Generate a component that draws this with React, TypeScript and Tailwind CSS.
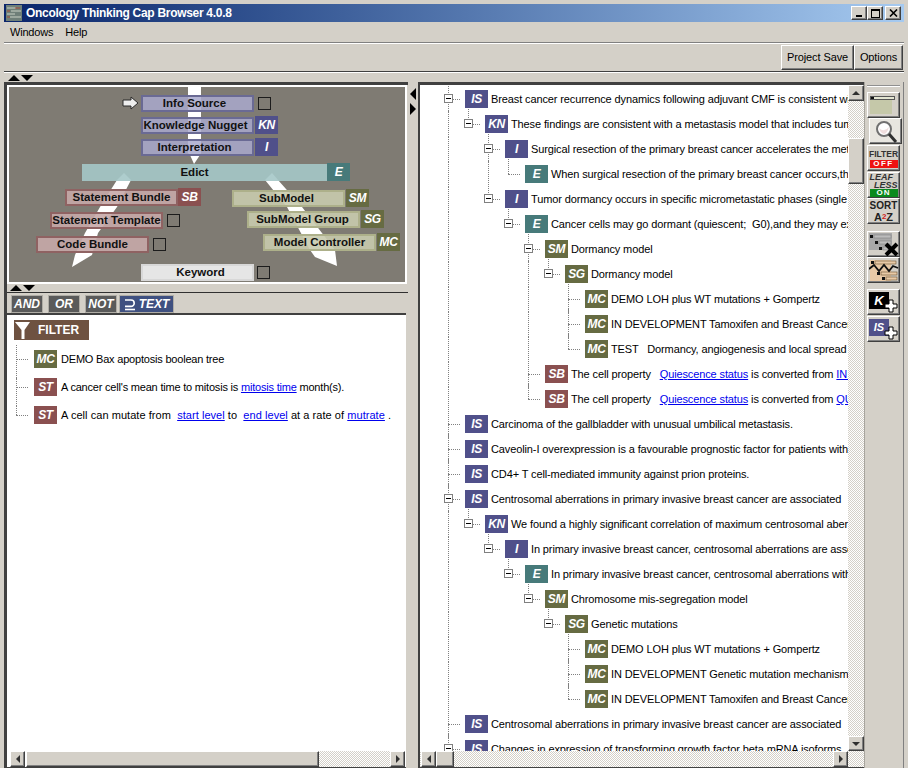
import React from "react";

const tagColors: Record<string, string> = {
  IS: "bg-[#50508a]", KN: "bg-[#50508a]", I: "bg-[#50508a]", E: "bg-[#477a7a]",
  SM: "bg-[#666b42]", SG: "bg-[#666b42]", MC: "bg-[#666b42]", SB: "bg-[#8a5050]", ST: "bg-[#8a5050]",
};

function Tag({ t }: { t: string }) {
  return (
    <span className={`${tagColors[t]} shrink-0 w-[23px] h-[18px] flex items-center justify-center text-white italic font-bold text-[12px] leading-none tracking-[-0.3px] font-['Liberation_Sans',sans-serif]`}>
      {t}
    </span>
  );
}

const raised = "bg-[#d4d0c8] border border-t-white border-l-white border-r-[#404040] border-b-[#404040] shadow-[inset_-1px_-1px_0_#808080]";
const checker = "bg-[repeating-conic-gradient(#d4d0c8_0_25%,#ffffff_0_50%)] bg-[length:2px_2px]";

function Tri({ dir, size = 4, color = "#000" }: { dir: "u" | "d" | "l" | "r"; size?: number; color?: string }) {
  const pts = { u: "0,6 12,6 6,0", d: "0,0 12,0 6,6", l: "6,0 6,12 0,6", r: "0,0 0,12 6,6" }[dir];
  const vertical = dir === "u" || dir === "d";
  return (
    <svg width={vertical ? size * 2 : size} height={vertical ? size : size * 2} viewBox={vertical ? "0 0 12 6" : "0 0 6 12"} className="block">
      <polygon points={pts} fill={color} />
    </svg>
  );
}

function ScrollBtn({ dir, className = "" }: { dir: "u" | "d" | "l" | "r"; className?: string }) {
  return (
    <div className={`${raised} shrink-0 flex items-center justify-center ${className}`}>
      <Tri dir={dir} color="#303030" />
    </div>
  );
}

type Seg = string | { link: string };
type Row = { level: number; tag: string; text: Seg[]; exp?: boolean };

const r = (level: number, tag: string, exp: boolean, ...text: Seg[]): Row => ({ level, tag, text, exp });

const rows: Row[] = [
  r(0, "IS", true, "Breast cancer recurrence dynamics following adjuvant CMF is consistent with tumor"),
  r(1, "KN", true, "These findings are consistent with a metastasis model that includes tumor dormancy"),
  r(2, "I", true, "Surgical resection of the primary breast cancer accelerates the metastatic process"),
  r(3, "E", false, "When surgical resection of the primary breast cancer occurs,the metastatic"),
  r(2, "I", true, "Tumor dormancy occurs in specific micrometastatic phases (single"),
  r(3, "E", true, "Cancer cells may go dormant (quiescent;  G0),and they may exit dormancy"),
  r(4, "SM", true, "Dormancy model"),
  r(5, "SG", true, "Dormancy model"),
  r(6, "MC", false, "DEMO LOH plus WT mutations + Gompertz"),
  r(6, "MC", false, "IN DEVELOPMENT Tamoxifen and Breast Cancer Recurrence"),
  r(6, "MC", false, "TEST   Dormancy, angiogenesis and local spread"),
  r(4, "SB", false, "The cell property   ", { link: "Quiescence status" }, " is converted from ", { link: "IN DORMANCY" }),
  r(4, "SB", false, "The cell property   ", { link: "Quiescence status" }, " is converted from ", { link: "QUIESCENT" }),
  r(0, "IS", false, "Carcinoma of the gallbladder with unusual umbilical metastasis."),
  r(0, "IS", false, "Caveolin-I overexpression is a favourable prognostic factor for patients with breast"),
  r(0, "IS", false, "CD4+ T cell-mediated immunity against prion proteins."),
  r(0, "IS", true, "Centrosomal aberrations in primary invasive breast cancer are associated"),
  r(1, "KN", true, "We found a highly significant correlation of maximum centrosomal aberrations with"),
  r(2, "I", true, "In primary invasive breast cancer, centrosomal aberrations are associated with"),
  r(3, "E", true, "In primary invasive breast cancer, centrosomal aberrations with genetic"),
  r(4, "SM", true, "Chromosome mis-segregation model"),
  r(5, "SG", true, "Genetic mutations"),
  r(6, "MC", false, "DEMO LOH plus WT mutations + Gompertz"),
  r(6, "MC", false, "IN DEVELOPMENT Genetic mutation mechanisms"),
  r(6, "MC", false, "IN DEVELOPMENT Tamoxifen and Breast Cancer Recurrence"),
  r(0, "IS", false, "Centrosomal aberrations in primary invasive breast cancer are associated"),
  r(0, "IS", true, "Changes in expression of transforming growth factor beta mRNA isoforms"),
];

function hasNextSibling(i: number, level: number) {
  for (let j = i + 1; j < rows.length; j++) {
    if (rows[j].level < level) return false;
    if (rows[j].level === level) return true;
  }
  return level === 0;
}

function ancestorContinues(i: number, level: number) {
  for (let j = i; j >= 0; j--) {
    if (rows[j].level === level) return hasNextSibling(j, level);
    if (rows[j].level < level) return false;
  }
  return false;
}

function Segs({ segs }: { segs: Seg[] }) {
  return (
    <>
      {segs.map((s, i) =>
        typeof s === "string" ? <span key={i}>{s}</span> : <span key={i} className="text-[#0000ee] underline">{s.link}</span>
      )}
    </>
  );
}

function TreeRow({ row, i }: { row: Row; i: number }) {
  const x = 28 + 20 * row.level;
  const guides: number[] = [];
  for (let l = 0; l < row.level; l++) if (ancestorContinues(i, l)) guides.push(l);
  return (
    <div className="relative h-[25px] flex items-start" style={{ paddingLeft: 45 + 20 * row.level }}>
      {guides.map((l) => (
        <div key={l} className="absolute -top-[1px] h-[26px] border-l border-dotted border-[#808080]" style={{ left: 28 + 20 * l }} />
      ))}
      <div className="absolute -top-[3px] h-[15px] border-l border-dotted border-[#808080]" style={{ left: x }} />
      {hasNextSibling(i, row.level) && (
        <div className="absolute top-[12px] h-[14px] border-l border-dotted border-[#808080]" style={{ left: x }} />
      )}
      <div className="absolute top-[12px] w-[12px] border-t border-dotted border-[#808080]" style={{ left: x }} />
      {row.exp && (
        <div className="absolute top-[7px] w-[9px] h-[9px] border border-[#808080] bg-white flex items-center justify-center" style={{ left: x - 4 }}>
          <div className="w-[5px] h-[1px] bg-black" />
        </div>
      )}
      <div className="mt-[3px] mr-[3px]"><Tag t={row.tag} /></div>
      <div className="mt-[3px] leading-[18px] text-[11px] tracking-[-0.12px] whitespace-pre text-black"><Segs segs={row.text} /></div>
    </div>
  );
}

type NodeDef = { x: number; y: number; w: number; label: string; cls: string; tag?: string; tagX?: number; check?: number; dx?: number };

const purple = "bg-[#a9a9cc]/85 border-2 border-[#6a6a94]";
const pink = "bg-[#c6a9a9]/90 border-2 border-[#8f6262]";
const olive = "bg-[#c9cbae]/90 border-2 border-[#adb08a]";

const nodes: NodeDef[] = [
  { x: 141, y: 95, w: 113, label: "Info Source", cls: purple, check: 258, dx: -3 },
  { x: 141, y: 117, w: 113, label: "Knowledge Nugget", cls: purple, tag: "KN", tagX: 255, dx: -2 },
  { x: 141, y: 139, w: 113, label: "Interpretation", cls: purple, tag: "I", tagX: 255, dx: -3 },
  { x: 82, y: 164, w: 245, label: "Edict", cls: "bg-[#a5c8c8]/90", tag: "E", tagX: 327, dx: -10 },
  { x: 65, y: 189, w: 113, label: "Statement Bundle", cls: pink, tag: "SB", tagX: 178 },
  { x: 50, y: 212, w: 113, label: "Statement Template", cls: pink, check: 167 },
  { x: 36, y: 236, w: 113, label: "Code Bundle", cls: pink, check: 153 },
  { x: 232, y: 190, w: 113, label: "SubModel", cls: olive, tag: "SM", tagX: 346, dx: -2 },
  { x: 247, y: 211, w: 113, label: "SubModel Group", cls: olive, tag: "SG", tagX: 361, dx: -1 },
  { x: 263, y: 234, w: 113, label: "Model Controller", cls: olive, tag: "MC", tagX: 377 },
  { x: 141, y: 264, w: 113, label: "Keyword", cls: "bg-[#e6e6e6] border-2 border-[#d8d8d8]", check: 257, dx: 3 },
];

const OX = 9;
const OY = 87;

function Diagram() {
  return (
    <div className="relative h-[199px] shrink-0 bg-[#7f7b73] border-2 border-white overflow-hidden font-['Liberation_Sans',sans-serif]">
      <svg className="absolute left-0 top-0" width="398" height="197" viewBox={`${OX} ${OY} 398 197`}>
        <polygon points="188,87 201,87 201,153 200,155 194,164 190,155 188,153" fill="#fff" />
        <polygon points="124,173 131,180 117,207 98,233 92,255 72,267 75,255 85,233 100,207 117,180" fill="#fff" />
        <polygon points="272,173 278,180 302,207 335,250 337,266 315,257 310,250 287,207 265,180" fill="#fff" />
      </svg>
      <svg className="absolute" style={{ left: 122 - OX, top: 96 - OY }} width="17" height="14" viewBox="0 0 17 14">
        <polygon points="1,4 9,4 9,1 16,7 9,13 9,10 1,10" fill="#eeeeee" stroke="#2a2a2a" strokeWidth="1" />
      </svg>
      {nodes.map((n) => (
        <React.Fragment key={n.label}>
          <div
            className={`absolute h-[17px] flex items-center justify-center text-[11.5px] font-bold text-[#111] whitespace-nowrap ${n.cls}`}
            style={{ left: n.x - OX, top: n.y - OY, width: n.w }}
          >
            <span style={{ marginLeft: (n.dx ?? 0) * 2 }}>{n.label}</span>
          </div>
          {n.tag && (
            <div className="absolute" style={{ left: (n.tagX as number) - OX, top: n.y - 1 - OY }}>
              <Tag t={n.tag} />
            </div>
          )}
          {n.check && (
            <div className="absolute w-[13px] h-[13px] bg-[#7f7b73] border border-[#1c1c1c]" style={{ left: n.check - OX, top: n.y + 2 - OY }} />
          )}
        </React.Fragment>
      ))}
    </div>
  );
}

function FilterBtn({ label, cls, icon }: { label: string; cls: string; icon?: boolean }) {
  return (
    <div className={`h-[16px] flex items-center justify-center gap-[3px] ${cls} text-white italic font-bold text-[12px] font-['Liberation_Sans',sans-serif] outline-1 outline-[#b0ada6]`}>
      {icon && (
        <svg width="12" height="13" viewBox="0 0 12 13" fill="none" stroke="#fff" strokeWidth="1.6">
          <path d="M1 2 H7 A3.2 3.2 0 0 1 7 8.4 H1" />
          <path d="M1 11.5 H11" />
        </svg>
      )}
      {label}
    </div>
  );
}

function ListRow({ tag, first, last, children }: { tag: string; first?: boolean; last?: boolean; children: React.ReactNode }) {
  return (
    <div className="relative h-[28px] flex items-start pl-[27px]">
      <div className={`absolute left-[9px] border-l border-dotted border-[#808080] ${first ? "-top-[5px] h-[33px]" : last ? "top-0 h-[9px]" : "top-0 h-[28px]"}`} />
      <div className="absolute left-[9px] top-[9px] w-[12px] border-t border-dotted border-[#808080]" />
      <Tag t={tag} />
      <div className={`ml-[4px] leading-[18px] text-[11px] whitespace-pre text-black ${last ? "tracking-[0.05px]" : "tracking-[-0.2px]"}`}>{children}</div>
    </div>
  );
}

const L = ({ c }: { c: string }) => <span className="text-[#0000ee] underline">{c}</span>;

function ToolBtn({ children, className = "" }: { children: React.ReactNode; className?: string }) {
  return <div className={`${raised} w-[33px] h-[26px] relative overflow-hidden flex flex-col items-center justify-center ${className}`}>{children}</div>;
}

function Plus() {
  return (
    <svg className="absolute right-[1px] bottom-[1px]" width="14" height="14" viewBox="0 0 14 14">
      <path d="M5 1 H9 V5 H13 V9 H9 V13 H5 V9 H1 V5 H5 Z" fill="#fff" stroke="#000" strokeWidth="1" />
    </svg>
  );
}

function SplitArrows() {
  return (
    <div className="flex items-center gap-[1px]">
      <Tri dir="u" size={6} />
      <Tri dir="d" size={6} />
    </div>
  );
}

export default function App() {
  return (
    <div className="w-[908px] h-[768px] overflow-hidden bg-[#d4d0c8] flex flex-col pt-[4px] px-[4px] font-['Liberation_Sans',sans-serif] text-black">
      {/* Title bar */}
      <div className="h-[18px] shrink-0 flex items-center bg-linear-to-r from-[#0a246a] to-[#a6caf0] pl-[2px] pr-[3px]">
        <svg width="16" height="16" viewBox="0 0 16 16" className="shrink-0">
          <rect width="16" height="16" fill="#6f7f78" />
          <path d="M1 3h9M5 6h10M1 9h8M4 12h11" stroke="#c9d2c4" strokeWidth="1.2" />
          <path d="M1 6h3M9 3h5M1 12h3" stroke="#a34f3d" strokeWidth="1.2" />
        </svg>
        <span className="ml-[4px] text-white font-bold text-[12px] tracking-[-0.3px] whitespace-nowrap">Oncology Thinking Cap Browser 4.0.8</span>
        <div className="ml-auto flex items-center">
          <div className={`${raised} w-[16px] h-[14px] flex items-end justify-center pb-[2px]`}><div className="w-[6px] h-[2px] bg-black" /></div>
          <div className={`${raised} w-[16px] h-[14px] flex items-center justify-center`}><div className="w-[9px] h-[9px] border border-black border-t-2" /></div>
          <div className={`${raised} ml-[2px] w-[16px] h-[14px] flex items-center justify-center`}>
            <svg width="9" height="8" viewBox="0 0 9 8"><path d="M1 0.5 L8 7.5 M8 0.5 L1 7.5" stroke="#000" strokeWidth="1.6" /></svg>
          </div>
        </div>
      </div>
      {/* Menu */}
      <div className="h-[21px] shrink-0 flex items-center gap-[12px] pl-[6px] text-[11px] tracking-[-0.2px] border-b border-[#808080]">
        <span>Windows</span>
        <span>Help</span>
      </div>
      {/* Toolbar */}
      <div className="h-[29px] shrink-0 flex items-center justify-end pr-[1px] border-t border-white border-b border-b-[#404040]">
        <div className="flex items-stretch h-[25px] text-[11px] tracking-[-0.1px]">
          <div className={`${raised} w-[73px] flex items-center justify-center`}>Project Save</div>
          <div className={`${raised} w-[49px] flex items-center justify-center`}>Options</div>
        </div>
      </div>
      {/* Split arrows */}
      <div className="h-[10px] shrink-0 flex items-center pl-[4px] border-t border-white">
        <SplitArrows />
      </div>
      {/* Main */}
      <div className="flex-1 min-h-0 flex">
        {/* Left pane */}
        <div className="w-[404px] shrink-0 flex flex-col border-l-[3px] border-t-[3px] border-[#404040] border-r-0">
          <div className="mr-[1px]"><Diagram /></div>
          <div className="h-[9px] shrink-0 flex items-center pl-[3px] border-b border-[#303030]"><SplitArrows /></div>
          <div className="h-[20px] shrink-0 flex items-center pl-[4px] pt-[2px]">
            <FilterBtn label="AND" cls="w-[30px] bg-[#5a5a5a] ml-[1px]" />
            <FilterBtn label="OR" cls="w-[30px] bg-[#5a5a5a] ml-[7px]" />
            <FilterBtn label="NOT" cls="w-[30px] bg-[#5a5a5a] ml-[7px]" />
            <FilterBtn label="TEXT" icon cls="w-[53px] bg-[#3f5080] ml-[4px]" />
          </div>
          <div className="flex-1 min-h-0 bg-white border-t-2 border-[#404040] mr-[2px] relative flex flex-col">
            <div className="mt-[5px] ml-[7px] w-[75px] h-[20px] bg-[#6e5241] flex items-center text-white font-bold text-[12px]">
              <svg width="18" height="19" viewBox="0 0 18 19" className="shrink-0">
                <path d="M1 1 H16 L10.5 9 V18 H7.5 V9 Z" fill="#fff" />
              </svg>
              <span className="ml-[6px]">FILTER</span>
            </div>
            <div className="mt-[10px] flex flex-col">
              <ListRow tag="MC" first>DEMO Bax apoptosis boolean tree</ListRow>
              <ListRow tag="ST">A cancer cell's mean time to mitosis is <L c="mitosis time" /> month(s).</ListRow>
              <ListRow tag="ST" last>A cell can mutate from  <L c="start level" /> to  <L c="end level" /> at a rate of <L c="mutrate" /> .</ListRow>
            </div>
            <div className="mt-auto h-[16px] flex pl-[3px] pr-[1px] shrink-0">
              <ScrollBtn dir="l" className="w-[15px]" />
              <div className={`${raised} w-[293px] ml-[1px]`} />
              <div className={`flex-1 ${checker}`} />
              <ScrollBtn dir="r" className="w-[15px]" />
            </div>
            <div className="h-[1px] bg-[#404040] shrink-0" />
          </div>
        </div>
        {/* Divider */}
        <div className="w-[10px] shrink-0 flex flex-col items-center pt-[6px] gap-[3px]">
          <Tri dir="l" size={6} />
          <Tri dir="r" size={6} />
        </div>
        {/* Tree pane */}
        <div className="w-[446px] shrink-0 flex flex-col border-l-2 border-t-[3px] border-[#404040] bg-white">
          <div className="flex-1 min-h-0 flex">
            <div className="flex-1 min-w-0 overflow-hidden pt-[2px] relative">
              {rows.map((row, i) => <TreeRow key={i} row={row} i={i} />)}
            </div>
            <div className={`w-[16px] shrink-0 flex flex-col ${checker}`}>
              <ScrollBtn dir="u" className="h-[16px]" />
              <div className={`${raised} h-[46px] mt-[37px] shrink-0`} />
              <ScrollBtn dir="d" className="h-[15px] mt-auto" />
            </div>
          </div>
          <div className="h-[16px] shrink-0 flex">
            <div className={`flex-1 min-w-0 flex ${checker}`}>
              <ScrollBtn dir="l" className="w-[15px] ml-[1px]" />
              <div className={`${raised} w-[18px]`} />
              <ScrollBtn dir="r" className="w-[15px] ml-auto" />
            </div>
            <div className={`w-[16px] shrink-0 ${checker}`} />
          </div>
          <div className="h-[1px] bg-[#404040] shrink-0" />
        </div>
        {/* Right tool column */}
        <div className="flex-1 min-w-0 flex flex-col pl-[2px] pt-[3px] border-l border-[#a8a59e] border-r border-r-[#808080]">
          <div className="h-[2px] w-[33px] bg-[#909090] border-b border-white mb-[5px]" />
          <ToolBtn>
            <svg width="28" height="20" viewBox="0 0 28 20">
              <rect x="0" y="2" width="22" height="17" fill="#c5c8a9" />
              <rect x="0.5" y="1.5" width="24" height="3" fill="#e4e6d2" stroke="#555" strokeWidth="1" />
              <rect x="1" y="2" width="3" height="2" fill="#111" />
            </svg>
          </ToolBtn>
          <ToolBtn className="ml-[2px] bg-[#e8e6e0]!">
            <svg width="24" height="24" viewBox="0 0 24 24">
              <circle cx="10" cy="10" r="7" fill="#fff" stroke="#707070" strokeWidth="2" />
              <path d="M5 9 Q10 14 15 8 Q13 15 10 15 Q6 14 5 9" fill="#f0dede" />
              <path d="M15 15 L22 23" stroke="#303030" strokeWidth="3" />
            </svg>
          </ToolBtn>
          <ToolBtn className="mt-[1px]">
            <span className="text-[8.5px] font-bold leading-[11px] text-[#333]">FILTER</span>
            <span className="w-[28px] h-[8px] bg-[#ee1111] text-white text-[8px] font-bold leading-[8px] text-center tracking-[1.5px]">OFF</span>
          </ToolBtn>
          <ToolBtn className="mt-[1px]">
            <div className="w-[28px] h-[8px] text-[9px] italic font-bold leading-[8px] text-[#333]">LEAF</div>
            <div className="w-[28px] h-[8px] text-[9px] italic font-bold leading-[8px] text-right text-[#333]">LESS</div>
            <span className="w-[28px] h-[8px] bg-[#0a8a1e] text-white text-[8px] font-bold leading-[8px] text-center tracking-[1px]">ON</span>
          </ToolBtn>
          <ToolBtn>
            <span className="text-[10px] font-bold leading-[11px] text-[#222]">SORT</span>
            <span className="text-[11px] font-bold leading-[12px] text-[#222]">A<span className="text-[#d02020] align-top text-[8px]">2</span>Z</span>
          </ToolBtn>
          <ToolBtn className="mt-[7px]">
            <svg width="30" height="23" viewBox="0 0 30 23">
              <rect x="0" y="0" width="23" height="17" fill="#a8a8a8" />
              <rect x="1" y="2" width="3" height="3" fill="#111" /><rect x="5" y="2" width="17" height="3" fill="#bcbcbc" stroke="#777" strokeWidth="0.5" />
              <rect x="6" y="8" width="3" height="3" fill="#111" /><rect x="10" y="8" width="12" height="3" fill="#bcbcbc" stroke="#777" strokeWidth="0.5" />
              <rect x="10" y="14" width="3" height="3" fill="#111" /><rect x="14" y="14" width="8" height="3" fill="#bcbcbc" stroke="#777" strokeWidth="0.5" />
              <path d="M17 11 L28 22 M28 11 L17 22" stroke="#000" strokeWidth="4" />
            </svg>
          </ToolBtn>
          <ToolBtn>
            <svg width="30" height="23" viewBox="0 0 30 23">
              <rect x="1" y="1" width="21" height="21" fill="#e8c9a6" />
              <rect x="2" y="2" width="3" height="3" fill="#111" /><rect x="6" y="2" width="21" height="3" fill="#e8c9a6" stroke="#6a5030" strokeWidth="0.6" />
              <rect x="8" y="13" width="3" height="3" fill="#111" /><rect x="12" y="13" width="16" height="3" fill="#e8c9a6" stroke="#6a5030" strokeWidth="0.6" />
              <rect x="13" y="18" width="3" height="3" fill="#111" /><rect x="17" y="18" width="11" height="3" fill="#e8c9a6" stroke="#6a5030" strokeWidth="0.6" />
              <path d="M0 10 L5 6 L10 12 L15 6 L20 12 L24 7 L29 9" fill="none" stroke="#111" strokeWidth="1.8" />
            </svg>
          </ToolBtn>
          <ToolBtn className="mt-[6px]">
            <div className="absolute left-[1px] top-[2px] w-[20px] h-[17px] bg-black text-white font-bold italic text-[13px] leading-[17px] text-center">K</div>
            <Plus />
          </ToolBtn>
          <ToolBtn className="mt-[1px]">
            <div className="absolute left-[1px] top-[2px] w-[20px] h-[17px] bg-[#50508a] text-white font-bold italic text-[11px] leading-[17px] text-center">IS</div>
            <Plus />
          </ToolBtn>
        </div>
      </div>
    </div>
  );
}
